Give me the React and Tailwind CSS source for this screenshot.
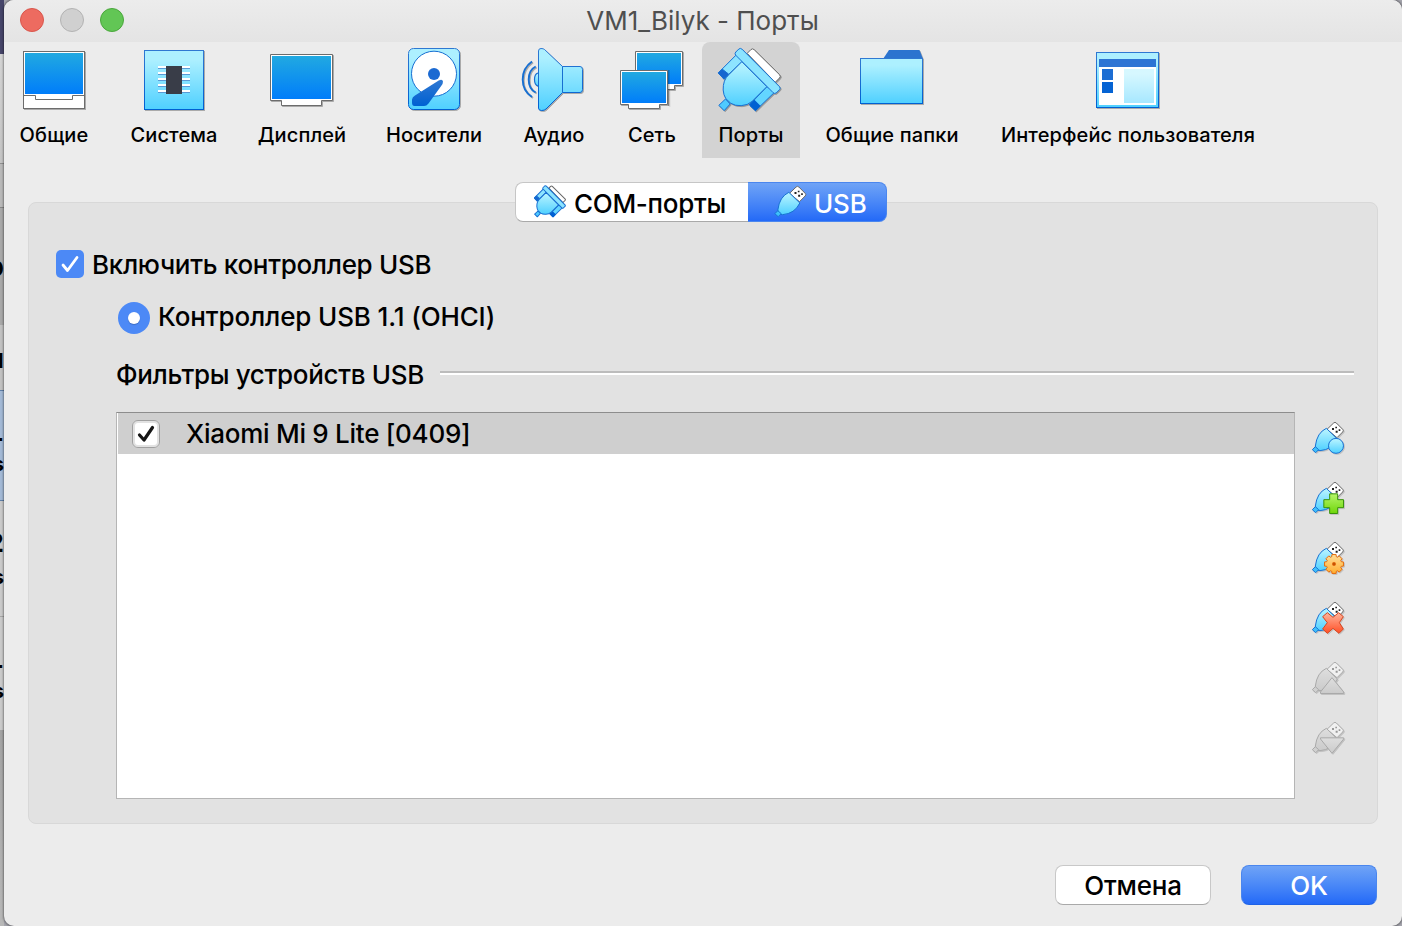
const BLUE = "#176fd2";

function Defs() {
  return (
    <svg className="absolute h-0 w-0" aria-hidden="true">
      <defs>
        <linearGradient id="screen" x1="0" y1="0" x2="0" y2="1">
          <stop offset="0" stopColor="#21a9e1" />
          <stop offset="1" stopColor="#007dfa" />
        </linearGradient>
        <linearGradient id="sky" x1="0" y1="0" x2="0" y2="1">
          <stop offset="0.15" stopColor="#adf0ff" />
          <stop offset="1" stopColor="#4fd0ff" />
        </linearGradient>
        <linearGradient id="edge" x1="0" y1="0" x2="0" y2="1">
          <stop offset="0" stopColor="#2f78d2" />
          <stop offset="1" stopColor="#0060d2" />
        </linearGradient>
        <linearGradient id="ghost" x1="0" y1="0" x2="0" y2="1">
          <stop offset="0" stopColor="#dedede" />
          <stop offset="1" stopColor="#cbcbcb" />
        </linearGradient>
        <linearGradient id="green" x1="0" y1="0" x2="0" y2="1">
          <stop offset="0" stopColor="#b5f56a" />
          <stop offset="1" stopColor="#6fd60a" />
        </linearGradient>
        <linearGradient id="amber" x1="0" y1="0" x2="0" y2="1">
          <stop offset="0" stopColor="#ffdf9a" />
          <stop offset="1" stopColor="#ffae30" />
        </linearGradient>
        <linearGradient id="coral" x1="0" y1="0" x2="0" y2="1">
          <stop offset="0" stopColor="#ffb59c" />
          <stop offset="1" stopColor="#ff4f26" />
        </linearGradient>
      </defs>
    </svg>
  );
}

function Icon({ children }) {
  return (
    <svg
      viewBox="0 0 64 64"
      className="h-16 w-16 shrink-0 overflow-visible [filter:drop-shadow(1px_1px_0_rgba(0,0,0,0.28))]"
    >
      {children}
    </svg>
  );
}

const GeneralIcon = () => (
  <Icon>
    <rect x="1.5" y="3.5" width="61" height="57" fill="#fff" stroke="#6c6c6c" />
    <rect x="3" y="5" width="58" height="41" fill="url(#screen)" />
    <path d="M1.5 47.5H13.5V51.5H50.5V47.5H62.5" fill="none" stroke="#6c6c6c" />
  </Icon>
);

const SystemIcon = () => (
  <Icon>
    <rect x="2.5" y="2.5" width="59" height="59" fill="url(#sky)" stroke="url(#edge)" />
    {[18, 24, 30, 36, 42].map((y) => (
      <g key={y}>
        <rect x="16" y={y} width="32" height="2" fill="#fff" />
        <rect x="16" y={y + 2} width="32" height="1" fill="#5a9ad6" />
      </g>
    ))}
    <rect x="24" y="18" width="16" height="28" fill="#393d48" />
  </Icon>
);

const DisplayIcon = () => (
  <Icon>
    <path d="M.5 6.5H62.5V52.5H51.5V57.5H11.5V52.5H.5Z" fill="#fff" stroke="#6c6c6c" />
    <rect x="2" y="8" width="59" height="43" fill="url(#screen)" />
  </Icon>
);

const StorageIcon = () => (
  <Icon>
    <rect x="6.5" y=".5" width="51" height="61" rx="5" fill="url(#sky)" stroke="url(#edge)" />
    <circle cx="32" cy="25.7" r="22.5" fill="#fff" stroke={BLUE} />
    <circle cx="32" cy="26" r="6" fill="#1b6ad2" />
    <path
      d="M36.700 32.500Q40.500 30.800 41 33.500Q41 35.500 39.500 37.500L26.500 55.500Q24.500 58 22 58H12.500Q10 58 10 54.500V51.500Q10.300 49 13 47.500Z"
      fill="url(#edge)"
    />
  </Icon>
);

const AudioIcon = () => (
  <Icon>
    <path d="M16 25Q12.500 26 12.500 31.500Q12.500 37 16 38" fill="url(#sky)" stroke={BLUE} strokeWidth="1.2" />
    <path d="M13.700 18.500Q6.700 22 6.700 31.500Q6.700 41 13.700 44.500M10 13.500Q.7 20 .7 31.500Q.7 43 10 49" fill="none" stroke={BLUE} strokeWidth="1.900" />
    <path
      d="M16.500 3Q16.500 .5 19 .5Q21.500 .5 22.500 1.500L40.500 18.500H58Q60.500 18.500 60.500 21.500V41.500Q60.500 44.500 58 44.500H40.500L24 61Q22.500 62.500 19.500 62.500Q16.500 62.500 16.500 60Z"
      fill="url(#sky)"
      stroke="url(#edge)"
    />
    <path d="M40.500 18.500V44.500" stroke={BLUE} />
  </Icon>
);

const NetworkIcon = () => (
  <Icon>
    <path d="M15.500 3.500H62.500V37.500H54.500V41.500H23.500V37.500H15.500Z" fill="#fff" stroke="#6c6c6c" />
    <rect x="17" y="5" width="44" height="31" fill="url(#screen)" />
    <path d="M48 22H49.500V58H48Z" fill="#000" opacity=".25" />
    <path d="M.5 22.500H47.500V56.500H39.500V60.500H8.500V56.500H.5Z" fill="#fff" stroke="#6c6c6c" />
    <rect x="2" y="24" width="44" height="31" fill="url(#screen)" />
  </Icon>
);

function PortsGlyph({ stroke = 3 }) {
  return (
    <g strokeWidth={stroke} strokeLinejoin="round">
      <path d="M173 160L184 149Q189 144 194 149L270 224Q275 229 270 234L257 247Z" fill="#fff" stroke="#666" />
      <path d="M88 316L108 297L122 312L104 332Z" fill="#4fcaff" stroke={BLUE} />
      <path d="M142 163L87 218L103 237L159 184Z" fill="#8de4ff" stroke={BLUE} />
      <path d="M98 207L86 219L103 237L118 223Z" fill="#1766cf" stroke={BLUE} />
      <path d="M256 276L198 332L180 315L232 260Z" fill="#63d5ff" stroke={BLUE} />
      <path d="M212 318L198 332L180 315L194 300Z" fill="#0060d2" stroke="#0060d2" />
      <path
        d="M157 185L118 224Q100 240 101 270Q102 285 109 296L124 310Q137 318 155 317Q175 316 188 304L232 260Z"
        fill="url(#sky)"
        stroke={BLUE}
      />
      <path d="M138 165Q135 160 139 156L148 147Q153 143 158 148L270 260Q274 265 270 269L260 279Q255 282 251 278Z" fill="#8ce4ff" stroke={BLUE} />
    </g>
  );
}

const PortsIcon = () => (
  <Icon>
    <g transform="translate(-29.5 -48) scale(.33333)">
      <PortsGlyph />
    </g>
  </Icon>
);

const FolderIcon = () => (
  <Icon>
    <path d="M23 11L29 2H59.500L63 11Z" fill="#2b74cf" />
    <rect x=".5" y="10.500" width="62" height="45" fill="url(#sky)" stroke="url(#edge)" />
  </Icon>
);

const InterfaceIcon = () => (
  <Icon>
    <rect x=".5" y="4.500" width="62" height="55" fill="url(#sky)" stroke="url(#edge)" />
    <rect x="3" y="11" width="57" height="46" fill="#fff" />
    <rect x="3" y="11" width="57" height="8" fill="#2d74d4" />
    <rect x="6" y="21" width="11" height="11" fill="#1c6dd3" />
    <rect x="6" y="34" width="11" height="11" fill="#0563d3" />
    <rect x="28" y="21" width="30" height="34" fill="url(#sky)" opacity=".5" />
  </Icon>
);

function UsbGlyph({ off = false }) {
  const line = off ? "#a9a9a9" : BLUE;
  const fill = off ? "url(#ghost)" : "url(#sky)";
  return (
    <g strokeWidth="3" strokeLinejoin="round">
      <path d="M111 88L131 69Q135 65 139 69L158 88Q162 92 158 96L141 113Z" fill={off ? "#f0f0f0" : "#fff"} stroke={off ? "#a9a9a9" : "#666"} />
      <path d="M126 84h6v6h-6zM136 80h5v5h-5zM137 92h6v6h-6zM146 88h5v5h-5z" fill={off ? "#999" : "#222"} />
      <path d="M109 85Q81 98 76 138Q75 151 90 152Q127 149 142 117Z" fill={fill} stroke={line} />
      <path d="M67 149L76 140L86 149L77 158Z" fill={off ? "#d0d0d0" : "#3fc0fa"} stroke={line} />
    </g>
  );
}

const gearPath = (() => {
  const pts = [];
  for (let i = 0; i < 8; i++) {
    const a = (i * Math.PI) / 4;
    [[-0.3, 23], [-0.22, 29], [0.22, 29], [0.3, 23]].forEach(([d, r]) =>
      pts.push(`${(132 + r * Math.cos(a + d)).toFixed(1)} ${(132 + r * Math.sin(a + d)).toFixed(1)}`)
    );
  }
  return `M${pts.join("L")}Z`;
})();

const badges = {
  blank: <circle cx="138" cy="137.500" r="22.500" fill="url(#sky)" stroke={BLUE} />,
  add: <path d="M119 101.500H143V119H160.500V143H143V160.500H119V143H101.500V119H119Z" fill="url(#green)" stroke="#37920a" />,
  edit: (
    <>
      <path d={gearPath} fill="url(#amber)" stroke="#e46a0c" />
      <circle cx="132" cy="132" r="5" fill="#c65204" stroke="#e46a0c" strokeWidth="2" />
    </>
  ),
  remove: (
    <path
      d="M112 98L129 112L146 98L160 110L148 128L160 147L147 160L129 145L112 160L98 147L112 128L98 110Z"
      fill="url(#coral)"
      stroke="#d8431c"
    />
  ),
  up: <path d="M126 113L161 156V160.500H91.500V156Z" fill="url(#ghost)" stroke="#a9a9a9" />,
  down: <path d="M91.500 113.500H161V117L126 160L91.500 117Z" fill="url(#ghost)" stroke="#a9a9a9" />,
};

function FilterButton({ kind, off, label }) {
  return (
    <button aria-label={label} className="h-9 w-9">
      <svg viewBox="0 0 36 36" className="h-9 w-9 [filter:drop-shadow(1px_1px_0_rgba(0,0,0,0.14))]">
        <g transform="translate(-22 -22) scale(.33333)" strokeWidth="3" strokeLinejoin="round">
          <UsbGlyph off={off} />
          {badges[kind]}
        </g>
      </svg>
    </button>
  );
}

function ToolItem({ icon, label, className }) {
  return (
    <div className={`flex h-[116px] shrink-0 flex-col items-center pt-[6px] ${className}`}>
      {icon}
      <span className="mt-[11px] whitespace-nowrap text-[20px] leading-6 font-[550] tracking-[0.12px]">{label}</span>
    </div>
  );
}

function Backdrop() {
  return (
    <div className="flex h-full w-1 shrink-0 flex-col overflow-hidden text-[26px] font-bold leading-none text-black [&>div]:flex [&>div]:shrink-0 [&>div]:flex-col [&>div]:items-end [&>div]:overflow-hidden">
      <div className="h-[54px] bg-[#464569]" />
      <div className="h-[109px] bg-gradient-to-b from-[#d4d4d4] to-[#c4c4c4]" />
      <div className="h-[44px] border-t border-[#8f8f8f] bg-[#b9b9b9]" />
      <div className="h-[118px] border-t border-[#858585] bg-[#a9a9a9] pt-[46px]">р</div>
      <div className="h-[65px] bg-[#c2c2c2] pt-[21px]">п</div>
      <div className="h-[111px] border-y border-[#5f7fa8] bg-[#a3b9d6] pt-[34px]">
        <span>-</span>
        <span className="mt-[3px] text-[20px]">s</span>
      </div>
      <div className="h-[116px] border-b border-[#a5a5a5] bg-[#cacaca] pt-[29px]">
        <span>2</span>
        <span className="mt-[11px] text-[20px]">s</span>
      </div>
      <div className="h-[113px] bg-[#cacaca] pt-[35px]">
        <span>-</span>
        <span className="mt-[3px] text-[20px]">s</span>
      </div>
      <div className="grow bg-gradient-to-b from-[#a3a3a3] to-[#b8b8b8]" />
    </div>
  );
}

export default function App() {
  return (
    <div className="flex h-[926px] w-[1402px] overflow-hidden bg-[#a5a5ad] font-['Inter','Liberation_Sans',sans-serif] text-black">
      <Defs />
      <Backdrop />
      <main className="flex h-full w-[1398px] flex-col rounded-[10px] bg-[#ececec] shadow-[0_0_2px_1px_rgba(0,0,0,0.35)]">
        <header className="flex h-[42px] shrink-0 items-center rounded-t-[10px] bg-gradient-to-b from-[#ececec] to-[#e4e4e4] pr-[140px] pl-4">
          <div className="mb-[2px] flex gap-4">
            <i className="h-6 w-6 rounded-full border border-[#d9564c] bg-[#ed6b60]" />
            <i className="h-6 w-6 rounded-full border border-[#b3b3b3] bg-[#d0d0d0]" />
            <i className="h-6 w-6 rounded-full border border-[#4aa73c] bg-[#62c655]" />
          </div>
          <h1 className="flex-1 pl-[19px] text-center text-[26px] leading-[42px] font-[430] text-[#4f4f4f]">VM1_Bilyk - Порты</h1>
        </header>

        <nav className="flex gap-2 pl-[2px]">
          <ToolItem icon={<GeneralIcon />} label="Общие" className="w-[100px] pr-1" />
          <ToolItem icon={<SystemIcon />} label="Система" className="w-[120px]" />
          <ToolItem icon={<DisplayIcon />} label="Дисплей" className="w-[120px]" />
          <ToolItem icon={<StorageIcon />} label="Носители" className="w-[128px]" />
          <ToolItem icon={<AudioIcon />} label="Аудио" className="w-[96px]" />
          <ToolItem icon={<NetworkIcon />} label="Сеть" className="w-[84px]" />
          <ToolItem icon={<PortsIcon />} label="Порты" className="w-[98px] rounded-t-lg bg-[#d3d3d3]" />
          <ToolItem icon={<FolderIcon />} label="Общие папки" className="w-[168px]" />
          <ToolItem icon={<InterfaceIcon />} label="Интерфейс пользователя" className="w-[288px]" />
        </nav>

        <div className="relative z-10 mt-6 flex h-10 justify-center self-start pl-[511px] text-[26px] font-[450]">
          <button className="flex h-10 w-[233px] items-center rounded-l-lg border border-r-0 border-[#c6c6c6] border-b-[#a9a9a9] bg-white pl-[18px]">
            <svg viewBox="0 0 34 34" className="h-[34px] w-[34px] shrink-0">
              <g transform="translate(-14 -23.500) scale(.16667)">
                <PortsGlyph stroke={6} />
              </g>
            </svg>
            <span className="ml-[6px] pt-[3px] tracking-[-0.3px]">COM-порты</span>
          </button>
          <button className="flex h-10 w-[139px] items-center rounded-r-lg border border-l-0 border-[#4a86ee] bg-gradient-to-b from-[#6fa3f6] to-[#2369f7] pl-[26px] text-white">
            <svg viewBox="0 0 36 36" className="h-9 w-9 shrink-0">
              <g transform="translate(-21.500 -20) scale(.33333)">
                <UsbGlyph />
              </g>
            </svg>
            <span className="ml-[4px] pt-[3px] tracking-[-0.2px]">USB</span>
          </button>
        </div>

        <section className="-mt-5 ml-6 h-[622px] w-[1350px] rounded-lg border border-[#d8d8d8] bg-[#e2e2e2] pl-[27px] font-[450]">
          <label className="mt-[47px] flex h-7 items-center">
            <span className="flex h-7 w-7 items-center justify-center rounded-[5px] bg-[#4c89f6]">
              <svg viewBox="0 0 28 28" className="h-7 w-7">
                <path d="M7 15L11.500 20.500L21 7.500" fill="none" stroke="#fff" strokeWidth="2.800" strokeLinecap="round" strokeLinejoin="round" />
              </svg>
            </span>
            <span className="ml-2 text-[26px] tracking-[-0.3px]">Включить контроллер USB</span>
          </label>
          <label className="mt-6 ml-[62px] flex h-8 items-center">
            <span className="flex h-8 w-8 items-center justify-center rounded-full bg-[#4c89f6]">
              <span className="h-3 w-3 rounded-full bg-white shadow-[0_1px_1px_rgba(0,0,0,0.2)]" />
            </span>
            <span className="ml-2 pb-[3px] text-[26px] tracking-[-0.13px]">Контроллер USB 1.1 (OHCI)</span>
          </label>
          <div className="mt-[23px] ml-[60px] flex h-[34px] w-[1238px] items-center">
            <h2 className="w-[324px] whitespace-nowrap text-[26px] tracking-[-0.32px]">Фильтры устройств USB</h2>
            <div className="mb-[2px] h-1 flex-1 border-t-2 border-b-2 border-t-[#bcbcbc] border-b-white" />
          </div>
          <div className="mt-[21px] ml-[60px] flex gap-[17px]">
            <div className="h-[387px] w-[1179px] border border-[#b5b5b5] border-t-[#8d8d8d] bg-white pl-px">
              <div className="flex h-[41px] items-center bg-[#cfcfcf] pl-[14px]">
                <span className="flex h-7 w-7 items-center justify-center rounded-[6px] border border-[#a0a0a0] bg-white shadow-[inset_0_0_0_2px_#e2e2e2]">
                  <svg viewBox="0 0 28 28" className="h-7 w-7 shrink-0">
                    <path d="M7.500 15L12 20L20.500 7.500" fill="none" stroke="#151515" strokeWidth="3.200" strokeLinecap="round" strokeLinejoin="round" />
                  </svg>
                </span>
                <span className="ml-[26px] text-[26px] tracking-[-0.27px]">Xiaomi Mi 9 Lite [0409]</span>
              </div>
            </div>
            <div className="flex flex-col gap-6 pt-[10px]">
              <FilterButton kind="blank" label="Новый фильтр" />
              <FilterButton kind="add" label="Добавить фильтр" />
              <FilterButton kind="edit" label="Изменить фильтр" />
              <FilterButton kind="remove" label="Удалить фильтр" />
              <FilterButton kind="up" off label="Вверх" />
              <FilterButton kind="down" off label="Вниз" />
            </div>
          </div>
        </section>

        <footer className="mt-[41px] flex justify-end gap-[30px] pr-[25px] text-[26px] font-[450] tracking-[-0.2px]">
          <button className="h-10 w-[156px] rounded-lg border border-[#c8c8c8] border-b-[#a9a9a9] bg-white">Отмена</button>
          <button className="h-10 w-[136px] rounded-lg border border-[#4a86ee] border-b-[#1f62e6] bg-gradient-to-b from-[#6fa3f6] to-[#2369f7] text-white">OK</button>
        </footer>
      </main>
    </div>
  );
}
